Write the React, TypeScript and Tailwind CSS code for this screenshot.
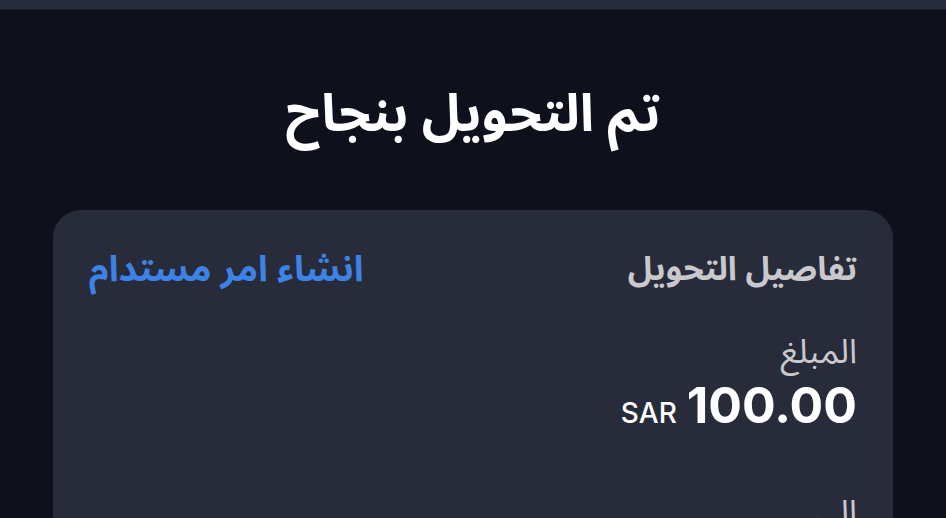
import React from "react";

const arabicFont = { fontFamily: '"Noto Sans Arabic", "DejaVu Sans", "Noto Sans", sans-serif' };
const latinFont = { fontFamily: '"Inter", "Liberation Sans", sans-serif' };

const App = () => {
  return (
    <div dir="rtl" className="h-screen w-full bg-[#0e111c] overflow-hidden" style={arabicFont}>
      {/* top bar */}
      <div className="h-[10px] bg-[#272b3b] border-b border-[#1b1e2a]" />

      <div className="flex flex-col items-center">
        <h1 className="mt-[70px] text-[52px] leading-[70px] font-bold text-white">تم التحويل بنجاح</h1>

        {/* transfer details card */}
        <div className="mt-[60px] w-[840px] bg-[#282c3a] rounded-[28px] px-[36px] pt-[32px] pb-[40px]">
          <div className="flex flex-row items-center justify-between">
            <div className="text-[33px] leading-[56px] font-bold text-[#c9c9cd]">تفاصيل التحويل</div>
            <button className="text-[36px] leading-[56px] font-bold text-[#3d82e6]">انشاء امر مستدام</button>
          </div>

          <div className="mt-[33px] flex flex-col">
            <div className="text-[34px] leading-[42px] text-[#c9c9cd]">المبلغ</div>
            <div className="mt-[4px] flex flex-row items-baseline gap-[10px]" dir="ltr">
              <div className="flex-1" />
              <span className="text-[28px] font-medium text-white" style={latinFont}>SAR</span>
              <span className="text-[50px] leading-[56px] font-bold text-white" style={latinFont}>100.00</span>
            </div>
          </div>

          <div className="mt-[55px] flex flex-col">
            <div className="text-[34px] leading-[48px] text-[#c9c9cd]">الى</div>
          </div>
        </div>
      </div>
    </div>
  );
};

export default App;
